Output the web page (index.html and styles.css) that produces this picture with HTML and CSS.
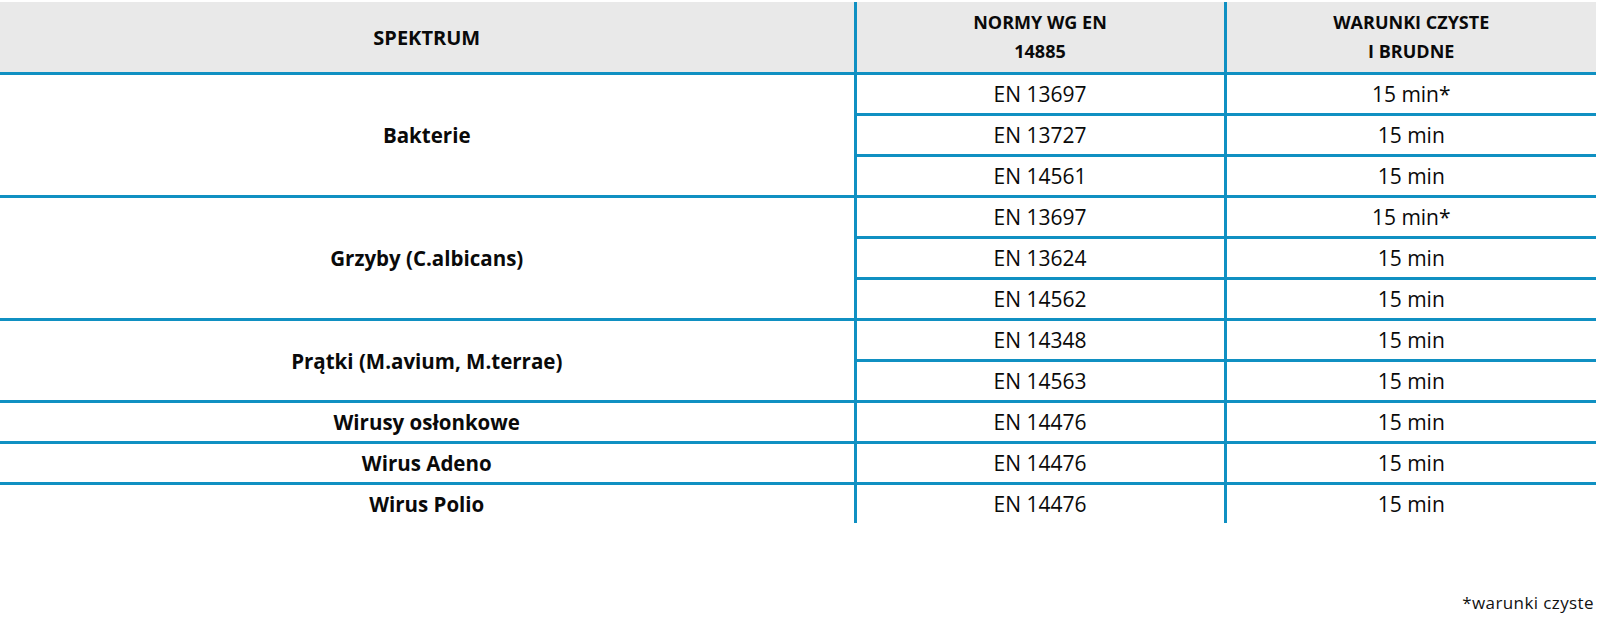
FILE: index.html
```html
<!DOCTYPE html>
<html lang="pl">
<head>
<meta charset="utf-8">
<title>Spektrum</title>
<link rel="stylesheet" href="styles.css">
</head>
<body>
<table class="spec">
  <colgroup>
    <col class="col-a">
    <col class="col-b">
    <col class="col-c">
  </colgroup>
  <thead>
    <tr>
      <th class="lead">SPEKTRUM</th>
      <th>NORMY WG EN<br>14885</th>
      <th>WARUNKI CZYSTE<br>I BRUDNE</th>
    </tr>
  </thead>
  <tbody>
    <tr><td class="name" rowspan="3">Bakterie</td><td>EN 13697</td><td>15 min*</td></tr>
    <tr class="sub"><td>EN 13727</td><td>15 min</td></tr>
    <tr class="sub"><td>EN 14561</td><td>15 min</td></tr>
  </tbody>
  <tbody>
    <tr><td class="name" rowspan="3">Grzyby (C.albicans)</td><td>EN 13697</td><td>15 min*</td></tr>
    <tr class="sub"><td>EN 13624</td><td>15 min</td></tr>
    <tr class="sub"><td>EN 14562</td><td>15 min</td></tr>
  </tbody>
  <tbody>
    <tr><td class="name" rowspan="2">Prątki (M.avium, M.terrae)</td><td>EN 14348</td><td>15 min</td></tr>
    <tr class="sub"><td>EN 14563</td><td>15 min</td></tr>
  </tbody>
  <tbody>
    <tr><td class="name">Wirusy osłonkowe</td><td>EN 14476</td><td>15 min</td></tr>
  </tbody>
  <tbody>
    <tr><td class="name">Wirus Adeno</td><td>EN 14476</td><td>15 min</td></tr>
  </tbody>
  <tbody>
    <tr><td class="name">Wirus Polio</td><td>EN 14476</td><td>15 min</td></tr>
  </tbody>
</table>
<p class="note">*warunki czyste</p>
</body>
</html>
```
FILE: styles.css
```css
html, body {
  margin: 0;
  padding: 0;
  background: #ffffff;
}

body {
  padding-top: 2px;
  font-family: "Open Sans", "Noto Sans", sans-serif;
  color: #0a0a0a;
}

.spec {
  width: 1596px;
  border-collapse: collapse;
  table-layout: fixed;
}

.col-a { width: 855px; }
.col-b { width: 370px; }
.col-c { width: 371px; }

.spec th,
.spec td {
  padding: 0;
  text-align: center;
  vertical-align: middle;
  border-right: 3px solid #1090c2;
}

.spec th:last-child,
.spec td:last-child {
  border-right: none;
}

.spec th {
  height: 70px;
  background: #e9e9e9;
  font-size: 18px;
  font-weight: 700;
  line-height: 29px;
  border-bottom: 3px solid #1090c2;
}

.spec th.lead {
  font-size: 20px;
}

.spec td {
  height: 38px;
  font-size: 21px;
  line-height: 24px;
  font-weight: 400;
}

.spec td.name {
  font-size: 20.5px;
  font-weight: 700;
}

.spec tbody + tbody tr:first-child td {
  border-top: 3px solid #1090c2;
}

.spec tr.sub td {
  border-top: 3px solid #1090c2;
}

.note {
  margin: 66px 8px 0 0;
  text-align: right;
  font-size: 17px;
  line-height: 28px;
  letter-spacing: 0.4px;
  color: #111;
}
```
